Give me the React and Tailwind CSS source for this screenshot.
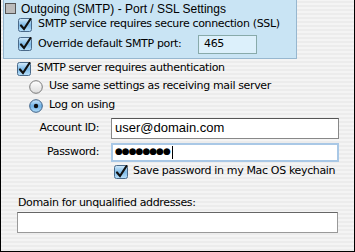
import React from 'react'

function Check({ checked = true }) {
  return (
    <svg width="14" height="14" viewBox="0 0 14 14" className="shrink-0">
      <defs>
        <linearGradient id="aq" x1="0" y1="0" x2="0" y2="1">
          <stop offset="0" stopColor="#d6ecfb" />
          <stop offset="0.5" stopColor="#7fbbe8" />
          <stop offset="1" stopColor="#b9e0fb" />
        </linearGradient>
      </defs>
      <rect x="0.5" y="0.5" width="13" height="13" rx="2" fill={checked ? 'url(#aq)' : '#fff'} stroke="#4a6a8a" />
      {checked && <path d="M3 7.5 L6 11 L12.5 1" fill="none" stroke="#111" strokeWidth="2.2" strokeLinecap="round" />}
    </svg>
  )
}

function Radio({ on = false }) {
  return (
    <svg width="14" height="14" viewBox="0 0 14 14" className="shrink-0">
      <defs>
        <linearGradient id="rg" x1="0" y1="0" x2="0" y2="1">
          <stop offset="0" stopColor="#ffffff" />
          <stop offset="1" stopColor="#dcdcdc" />
        </linearGradient>
        <linearGradient id="rb" x1="0" y1="0" x2="0" y2="1">
          <stop offset="0" stopColor="#cfe8fa" />
          <stop offset="0.5" stopColor="#6fb2e6" />
          <stop offset="1" stopColor="#b3dcf8" />
        </linearGradient>
      </defs>
      <circle cx="7" cy="7" r="6.3" fill={on ? 'url(#rb)' : 'url(#rg)'} stroke={on ? '#3c5f84' : '#7a7a7a'} />
      {on && <circle cx="7" cy="7" r="2.2" fill="#111" />}
    </svg>
  )
}

export default function App() {
  const ui = "font-['DejaVu_Sans',sans-serif] text-[11px] tracking-[-0.35px] text-black"
  return (
    <div className={`w-[355px] h-[252px] border-x border-b border-black bg-[repeating-linear-gradient(0deg,#ececec_0px,#ececec_2px,#f4f4f4_2px,#f4f4f4_4px)] ${ui} overflow-hidden`}>
      <div className="ml-[2px] w-[294px] h-[59px] bg-[#c9e4f4] border-x border-b border-[#97b7cf] pl-[14px]">
        <div className="flex items-center h-[17px] -ml-[13px]">
          <div className="w-[11px] h-[11px] border border-[#555] bg-[#bbb] mr-[5px]" />
          <span className="font-['Liberation_Sans',sans-serif] text-[12px] tracking-normal">Outgoing (SMTP) - Port / SSL Settings</span>
        </div>
        <div className="flex items-center gap-[6px] h-[17px] mt-[-1px]">
          <Check />
          <span>SMTP service requires secure connection (SSL)</span>
        </div>
        <div className="flex items-center gap-[6px] h-[22px]">
          <Check />
          <span className="w-[154px] whitespace-nowrap">Override default SMTP port:</span>
          <div className="w-[59px] h-[19px] bg-[#dcf0fb] border border-[#8aa] flex items-center pl-[5px]">465</div>
        </div>
      </div>
      <div className="pl-[16px] pt-[2px]">
        <div className="flex items-center gap-[6px] h-[15px]">
          <Check />
          <span>SMTP server requires authentication</span>
        </div>
        <div className="pl-[12px] pt-[1px]">
          <div className="flex items-center gap-[6px] h-[19px]">
            <Radio />
            <span>Use same settings as receiving mail server</span>
          </div>
          <div className="flex items-center gap-[6px] h-[19px]">
            <Radio on />
            <span>Log on using</span>
          </div>
        </div>
        <div className="flex items-center h-[22px] mt-[2px]">
          <span className="w-[82px] text-right">Account ID:</span>
          <div className="ml-[12px] w-[228px] h-[21px] bg-white border border-[#888] border-t-[#555] flex items-center pl-[3px] font-['Liberation_Sans',sans-serif] text-[13px] tracking-normal">user@domain.com</div>
        </div>
        <div className="flex items-center h-[22px] mt-[2px]">
          <span className="w-[82px] text-right">Password:</span>
          <div className="ml-[12px] w-[228px] h-[19px] bg-white border-2 border-[#a9c8e6] flex items-center pl-[2px] text-[9px] tracking-[-1px]">
            ●●●●●●●●<span className="w-px h-[13px] bg-black ml-[2px]" />
          </div>
        </div>
        <div className="flex items-center gap-[5px] h-[17px] pl-[97px]">
          <Check />
          <span>Save password in my Mac OS keychain</span>
        </div>
        <div className="mt-[16px] h-[14px] flex items-center pl-px">Domain for unqualified addresses:</div>
        <div className="mt-[2px] w-[321px] h-[21px] bg-white border border-[#999] border-t-[#666]" />
      </div>
    </div>
  )
}
